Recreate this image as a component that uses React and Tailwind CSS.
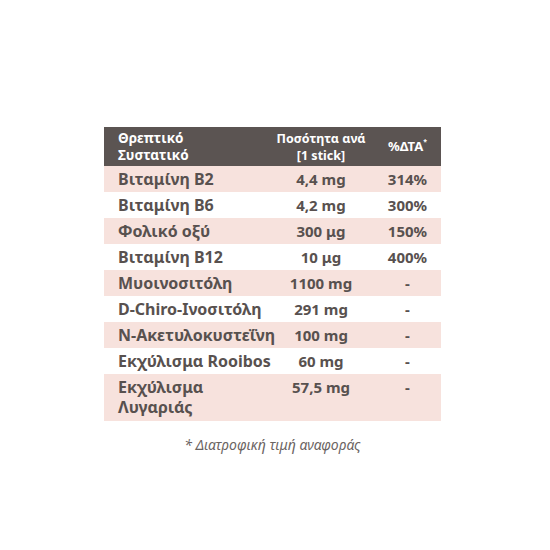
import React from 'react';

const rows = [
  { name: 'Βιταμίνη B2', amount: '4,4 mg', dta: '314%' },
  { name: 'Βιταμίνη B6', amount: '4,2 mg', dta: '300%' },
  { name: 'Φολικό οξύ', amount: '300 μg', dta: '150%' },
  { name: 'Βιταμίνη B12', amount: '10 μg', dta: '400%' },
  { name: 'Μυοινοσιτόλη', amount: '1100 mg', dta: '-' },
  { name: 'D-Chiro-Ινοσιτόλη', amount: '291 mg', dta: '-' },
  { name: 'N-Ακετυλοκυστεΐνη', amount: '100 mg', dta: '-' },
  { name: 'Εκχύλισμα Rooibos', amount: '60 mg', dta: '-' },
  { name: 'Εκχύλισμα Λυγαριάς', amount: '57,5 mg', dta: '-', tall: true },
];

const App = () => {
  return (
    <div
      className="w-[550px] h-[550px] bg-white pt-[127px] pl-[104px]"
      style={{ fontFamily: '"Noto Sans", "Open Sans", sans-serif' }}
    >
      <div className="w-[337px]">
        {/* Header */}
        <div className="grid grid-cols-[164px_106px_67px] h-[39px] bg-[#5b5452] text-white font-bold">
          <div className="pl-[14px] text-[13.5px] leading-[17px] flex flex-col justify-center">
            <span>Θρεπτικό</span>
            <span>Συστατικό</span>
          </div>
          <div className="text-[12.5px] leading-[17px] flex flex-col items-center justify-center whitespace-nowrap">
            <span>Ποσότητα ανά</span>
            <span>[1 stick]</span>
          </div>
          <div className="text-[13px] flex items-center justify-center">
            %ΔΤΑ<sup className="text-[7px] -top-[5px]">*</sup>
          </div>
        </div>

        {/* Rows */}
        {rows.map((r, i) => (
          <div
            key={r.name}
            className={`grid grid-cols-[164px_106px_67px] text-[#58514f] font-bold ${
              i % 2 === 0 ? 'bg-[#f7e2dd]' : 'bg-white'
            } ${r.tall ? 'h-[47px] items-start pt-[3px] leading-[20px]' : 'h-[26px] items-center leading-[18px]'}`}
          >
            <div className={`pl-[14px] text-[16px] ${r.tall ? 'w-[110px]' : 'whitespace-nowrap'}`}>{r.name}</div>
            <div className="text-center text-[15px]">{r.amount}</div>
            <div className="text-center text-[15px]">{r.dta}</div>
          </div>
        ))}
      </div>

      {/* Footnote */}
      <div className="w-[337px] mt-[13px] text-center italic text-[14px] text-[#6b6462]">
        * Διατροφική τιμή αναφοράς
      </div>
    </div>
  );
};

export default App;
